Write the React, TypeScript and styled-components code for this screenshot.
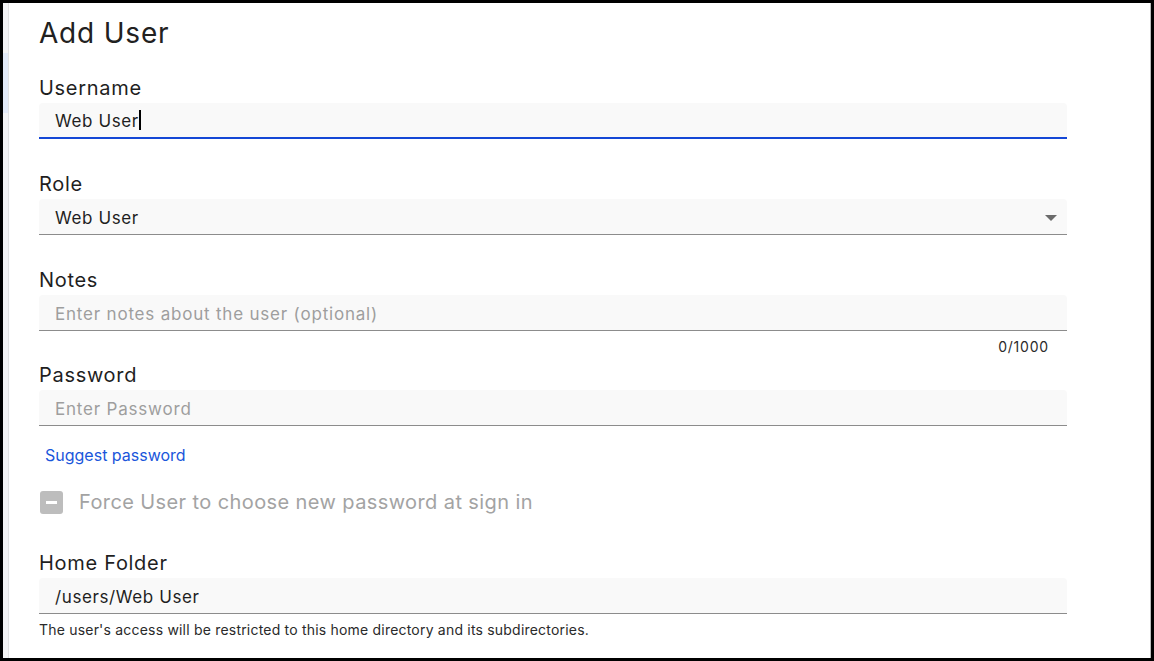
import React from "react";
import styled, { createGlobalStyle } from "styled-components";

const GlobalStyle = createGlobalStyle`
  html, body {
    margin: 0;
    padding: 0;
    background: #ffffff;
  }
  * {
    box-sizing: border-box;
  }
`;

const Frame = styled.div`
  width: 1154px;
  height: 661px;
  border: 3px solid #000;
  display: flex;
  overflow: hidden;
  font-family: "Inter", "Noto Sans", sans-serif;
  color: #1f1f1f;
`;

const SideStrip = styled.div`
  width: 6px;
  background: #f4f4f5;
  border-right: 1px solid #e2e2e2;
  padding-top: 50px;
`;

const SideMark = styled.div`
  height: 60px;
  background: #e3eaf7;
`;

const Main = styled.div`
  flex: 1;
  padding: 13px 0 0 30px;
  border-right: 1px solid #bdbdbd;
`;

const Title = styled.h1`
  margin: 0 0 26px;
  font-size: 28px;
  line-height: 34px;
  font-weight: 400;
  letter-spacing: 0.8px;
  color: #212121;
`;

const Form = styled.div`
  width: 1028px;
  display: flex;
  flex-direction: column;
`;

const Field = styled.div<{ $gap?: number }>`
  display: flex;
  flex-direction: column;
  margin-bottom: ${(p) => (p.$gap ?? 33)}px;
`;

const Label = styled.label`
  font-size: 20px;
  line-height: 24px;
  letter-spacing: 0.7px;
  margin-bottom: 3px;
  color: #1f1f1f;
`;

const InputBox = styled.div<{ $focused?: boolean }>`
  position: relative;
  height: 36px;
  background: #f9f9f9;
  border-radius: 4px 4px 0 0;
  border-bottom: ${(p) => (p.$focused ? "2px solid #1447d6" : "1px solid #8c8c8c")};
  display: flex;
  align-items: center;
  padding: 2px 10px 0 16px;
  font-size: 17px;
  letter-spacing: 0.6px;
`;

const Value = styled.span`
  color: #1f1f1f;
`;

const Placeholder = styled.span`
  color: #9e9e9e;
  letter-spacing: 0.8px;
`;

const Caret = styled.span`
  display: inline-block;
  width: 2px;
  height: 20px;
  background: #000;
  position: relative;
  top: -1px;
`;

const Arrow = styled.span`
  margin-left: auto;
  width: 0;
  height: 0;
  border-left: 6px solid transparent;
  border-right: 6px solid transparent;
  border-top: 6px solid #6b6b6b;
`;

const Counter = styled.div`
  margin-top: 8px;
  font-size: 14px;
  line-height: 16px;
  letter-spacing: 0.8px;
  text-align: right;
  padding-right: 18px;
  color: #2a2a2a;
`;

const Link = styled.a`
  margin: 19px 0 0 6px;
  font-size: 16px;
  line-height: 20px;
  color: #1a56db;
  text-decoration: none;
  cursor: pointer;
`;

const CheckRow = styled.div`
  display: flex;
  align-items: center;
  gap: 16px;
  margin: 25px 0 37px 1px;
`;

const CheckBox = styled.span`
  width: 23px;
  height: 23px;
  border-radius: 3px;
  background: #bdbdbd;
  display: flex;
  align-items: center;
  justify-content: center;

  &::after {
    content: "";
    width: 11px;
    height: 3px;
    background: #fff;
  }
`;

const CheckLabel = styled.span`
  font-size: 20px;
  line-height: 24px;
  letter-spacing: 0.4px;
  color: #a3a3a3;
`;

const Helper = styled.div`
  margin-top: 8px;
  font-size: 14px;
  line-height: 16px;
  letter-spacing: 0.2px;
  color: #2a2a2a;
`;

export default function App() {
  return (
    <>
      <GlobalStyle />
      <Frame>
        <SideStrip>
          <SideMark />
        </SideStrip>
        <Main>
          <Title>Add User</Title>
          <Form>
            <Field>
              <Label>Username</Label>
              <InputBox $focused>
                <Value>Web User</Value>
                <Caret />
              </InputBox>
            </Field>
            <Field>
              <Label>Role</Label>
              <InputBox>
                <Value>Web User</Value>
                <Arrow />
              </InputBox>
            </Field>
            <Field $gap={8}>
              <Label>Notes</Label>
              <InputBox>
                <Placeholder>Enter notes about the user (optional)</Placeholder>
              </InputBox>
              <Counter>0/1000</Counter>
            </Field>
            <Field $gap={0}>
              <Label>Password</Label>
              <InputBox>
                <Placeholder>Enter Password</Placeholder>
              </InputBox>
            </Field>
            <Link>Suggest password</Link>
            <CheckRow>
              <CheckBox />
              <CheckLabel>Force User to choose new password at sign in</CheckLabel>
            </CheckRow>
            <Field $gap={0}>
              <Label>Home Folder</Label>
              <InputBox>
                <Value>/users/Web User</Value>
              </InputBox>
              <Helper>The user's access will be restricted to this home directory and its subdirectories.</Helper>
            </Field>
          </Form>
        </Main>
      </Frame>
    </>
  );
}
